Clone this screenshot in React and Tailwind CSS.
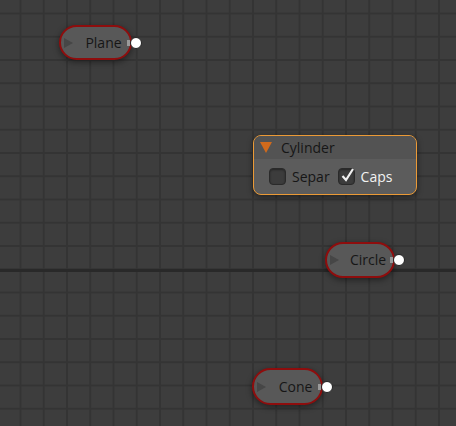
import React from "react";

const font = { fontFamily: '"Open Sans", "DejaVu Sans", sans-serif' };

// collapsed node, drawn as a pill with an output socket on the right
const PillNode = ({ label, className }) => (
  <div className={`absolute ${className}`}>
    <div className="relative h-full w-full rounded-full border-2 border-[#8e0d0d] bg-[#585858] shadow-[0_2px_6px_rgba(0,0,0,0.45)] flex items-center">
      <svg className="absolute left-[3px] top-1/2 -translate-y-1/2" width="9" height="10" viewBox="0 0 9 10">
        <path d="M0 0 L9 5 L0 10 Z" fill="#464646" />
      </svg>
      <span className="flex-1 text-center pl-[16px] text-[14px] leading-none text-[#161616]">{label}</span>
      <div className="absolute -right-[12px] top-1/2 -translate-y-1/2 flex items-center">
        <div className="w-[3px] h-[6px] bg-[#9a9a9a]" />
        <div className="w-[12px] h-[12px] rounded-full bg-white border border-[#222]" />
      </div>
    </div>
  </div>
);

const Checkbox = ({ checked, label, light }) => (
  <div className="flex items-center gap-[6px]">
    <div className="relative w-[17px] h-[17px] rounded-[4px] bg-[#3c3c3c] border border-[#2a2a2a] shadow-[inset_0_1px_2px_rgba(0,0,0,0.4)]">
      {checked && (
        <svg className="absolute left-[1px] -top-[2px]" width="15" height="16" viewBox="0 0 15 16">
          <path d="M2.5 9 L6 13 L13 2" fill="none" stroke="#f0f0f0" strokeWidth="2.2" />
        </svg>
      )}
    </div>
    <span className={`text-[14px] leading-none ${light ? "text-[#f2f2f2]" : "text-[#161616]"}`}>{label}</span>
  </div>
);

export default function App() {
  return (
    <div
      style={font}
      className="relative w-[456px] h-[426px] overflow-hidden bg-[#3d3d3d] bg-[linear-gradient(to_right,#343434_2px,transparent_2px),linear-gradient(to_bottom,#343434_2px,transparent_2px)] bg-[size:23.25px_23.25px] bg-[position:19.5px_12.5px]"
    >
      {/* major grid line */}
      <div className="absolute left-0 right-0 top-[269px] h-[3px] bg-[#292929]" />

      <PillNode label="Plane" className="left-[59px] top-[25px] w-[73px] h-[35px]" />
      <PillNode label="Circle" className="left-[325px] top-[242px] w-[70px] h-[36px]" />
      <PillNode label="Cone" className="left-[252px] top-[368px] w-[71px] h-[37px]" />

      {/* Cylinder node, selected */}
      <div className="absolute left-[253px] top-[135px] w-[164px] h-[60px] rounded-[8px] border-[1.5px] border-[#eb9a36] bg-[#5c5c5c] shadow-[0_2px_6px_rgba(0,0,0,0.45)] overflow-hidden flex flex-col">
        <div className="h-[23px] bg-[#535353] flex items-center gap-[9px] pl-[6px]">
          <svg width="12" height="11" viewBox="0 0 12 11">
            <path d="M0 0 L12 0 L6 11 Z" fill="#d06a1c" />
          </svg>
          <span className="text-[14px] leading-none text-[#161616]">Cylinder</span>
        </div>
        <div className="flex-1 flex items-center gap-[8px] pl-[15px]">
          <Checkbox label="Separ" />
          <Checkbox label="Caps" checked light />
        </div>
      </div>
    </div>
  );
}
